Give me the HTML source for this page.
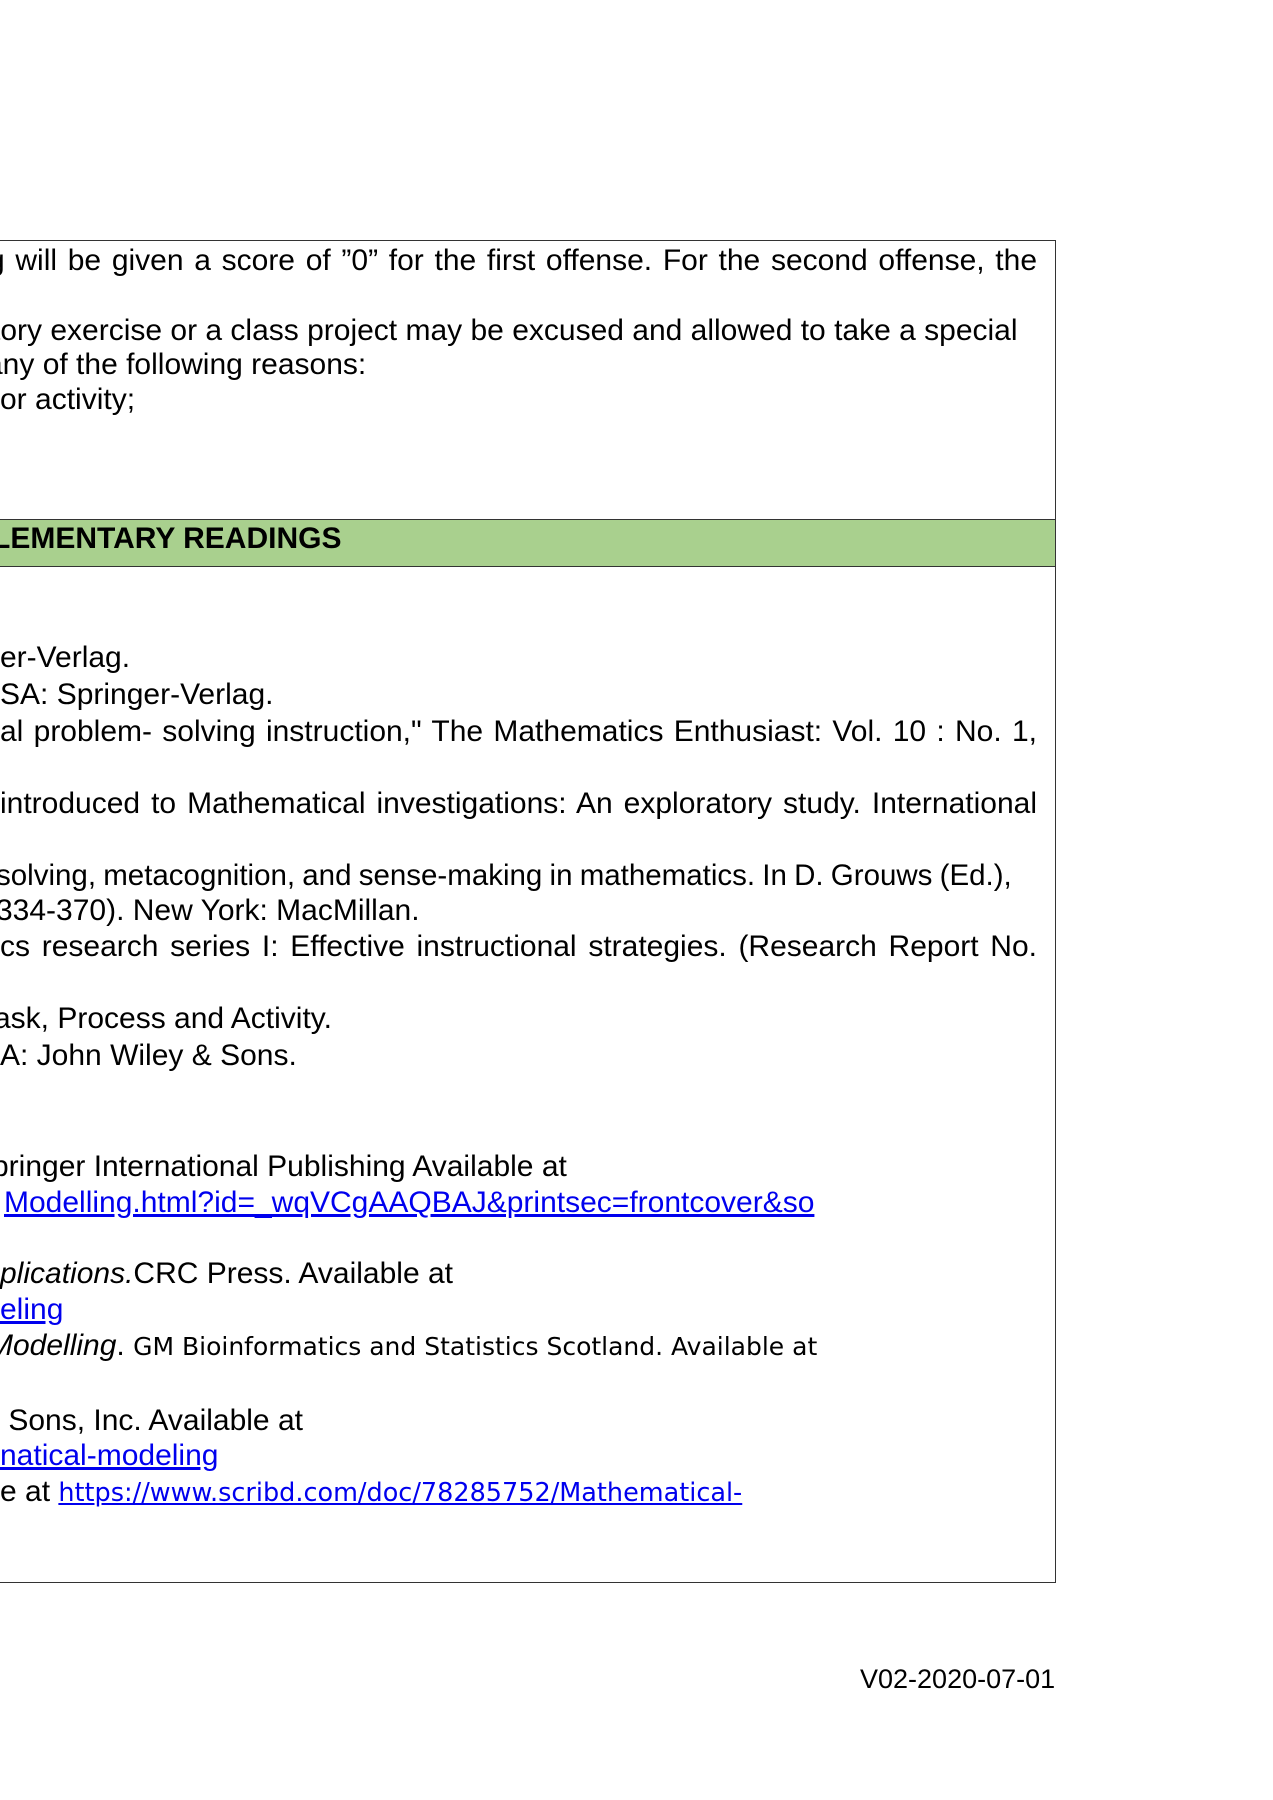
<!DOCTYPE html>
<html><head><meta charset="utf-8"><style>
html,body{margin:0;padding:0;background:#fff;width:1273px;height:1800px;overflow:hidden;position:relative;font-family:"Liberation Sans",Arial,sans-serif;color:#000}
.l{position:absolute;left:0;font-size:30px;line-height:30px;white-space:nowrap}
.j{width:1037px;text-align:justify;text-align-last:justify;white-space:normal}
.box{position:absolute;left:-10px;top:240px;width:1065px;height:1341px;border:1.5px solid #333;border-left:none}
.hdr{position:absolute;left:-10px;top:519px;width:1065px;height:46px;background:#a9d08e;border-top:1.5px solid #333;border-bottom:1.5px solid #333}
a{color:#0000ee;text-decoration:underline}
.c{font-family:"DejaVu Sans",sans-serif;font-size:25px}
</style></head><body>
<div class="box"></div>
<div class="hdr"></div>
<div class="l j" style="top:246px;left:-12px;width:1049px">g will be given a score of ”0” for the first offense. For the second offense, the</div>
<div class="l" style="top:316px;left:-8px">tory exercise or a class project may be excused and allowed to take a special</div>
<div class="l" style="top:350px;left:-14px">any of the following reasons:</div>
<div class="l" style="top:385px">or activity;</div>
<div class="l" style="top:524px;font-weight:bold;left:-8px">LEMENTARY READINGS</div>
<div class="l" style="top:643px">er-Verlag.</div>
<div class="l" style="top:680px">SA: Springer-Verlag.</div>
<div class="l j" style="top:717px">al problem- solving instruction," The Mathematics Enthusiast: Vol. 10 : No. 1,</div>
<div class="l j" style="top:789px">introduced to Mathematical investigations: An exploratory study. International</div>
<div class="l" style="top:861px;left:-4px;font-size:29.5px;word-spacing:-1px">solving, metacognition, and sense-making in mathematics. In D. Grouws (Ed.),</div>
<div class="l" style="top:896px;left:-4px">334-370). New York: MacMillan.</div>
<div class="l j" style="top:932px">cs research series I: Effective instructional strategies. (Research Report No.</div>
<div class="l" style="top:1004px;left:-6px">ask, Process and Activity.</div>
<div class="l" style="top:1041px">A: John Wiley &amp; Sons.</div>
<div class="l" style="top:1152px;left:-8px">pringer International Publishing Available at</div>
<div class="l" style="top:1188px;left:4px"><a>Modelling.html?id=_wqVCgAAQBAJ&amp;printsec=frontcover&amp;so</a></div>
<div class="l" style="top:1259px"><i>plications.</i>CRC Press. Available at</div>
<div class="l" style="top:1295px"><a>eling</a></div>
<div class="l" style="top:1331px;left:-12px"><i>Modelling</i>. <span class="c">GM Bioinformatics and Statistics Scotland. Available at</span></div>
<div class="l" style="top:1406px">&nbsp;Sons, Inc. Available at</div>
<div class="l" style="top:1441px"><a>natical-modeling</a></div>
<div class="l" style="top:1477px">e at <a class="c" style="font-size:25.5px">https://www.scribd.com/doc/78285752/Mathematical-</a></div>
<div class="l" style="top:1664px;left:860px;font-size:27px">V02-2020-07-01</div>
</body></html>
